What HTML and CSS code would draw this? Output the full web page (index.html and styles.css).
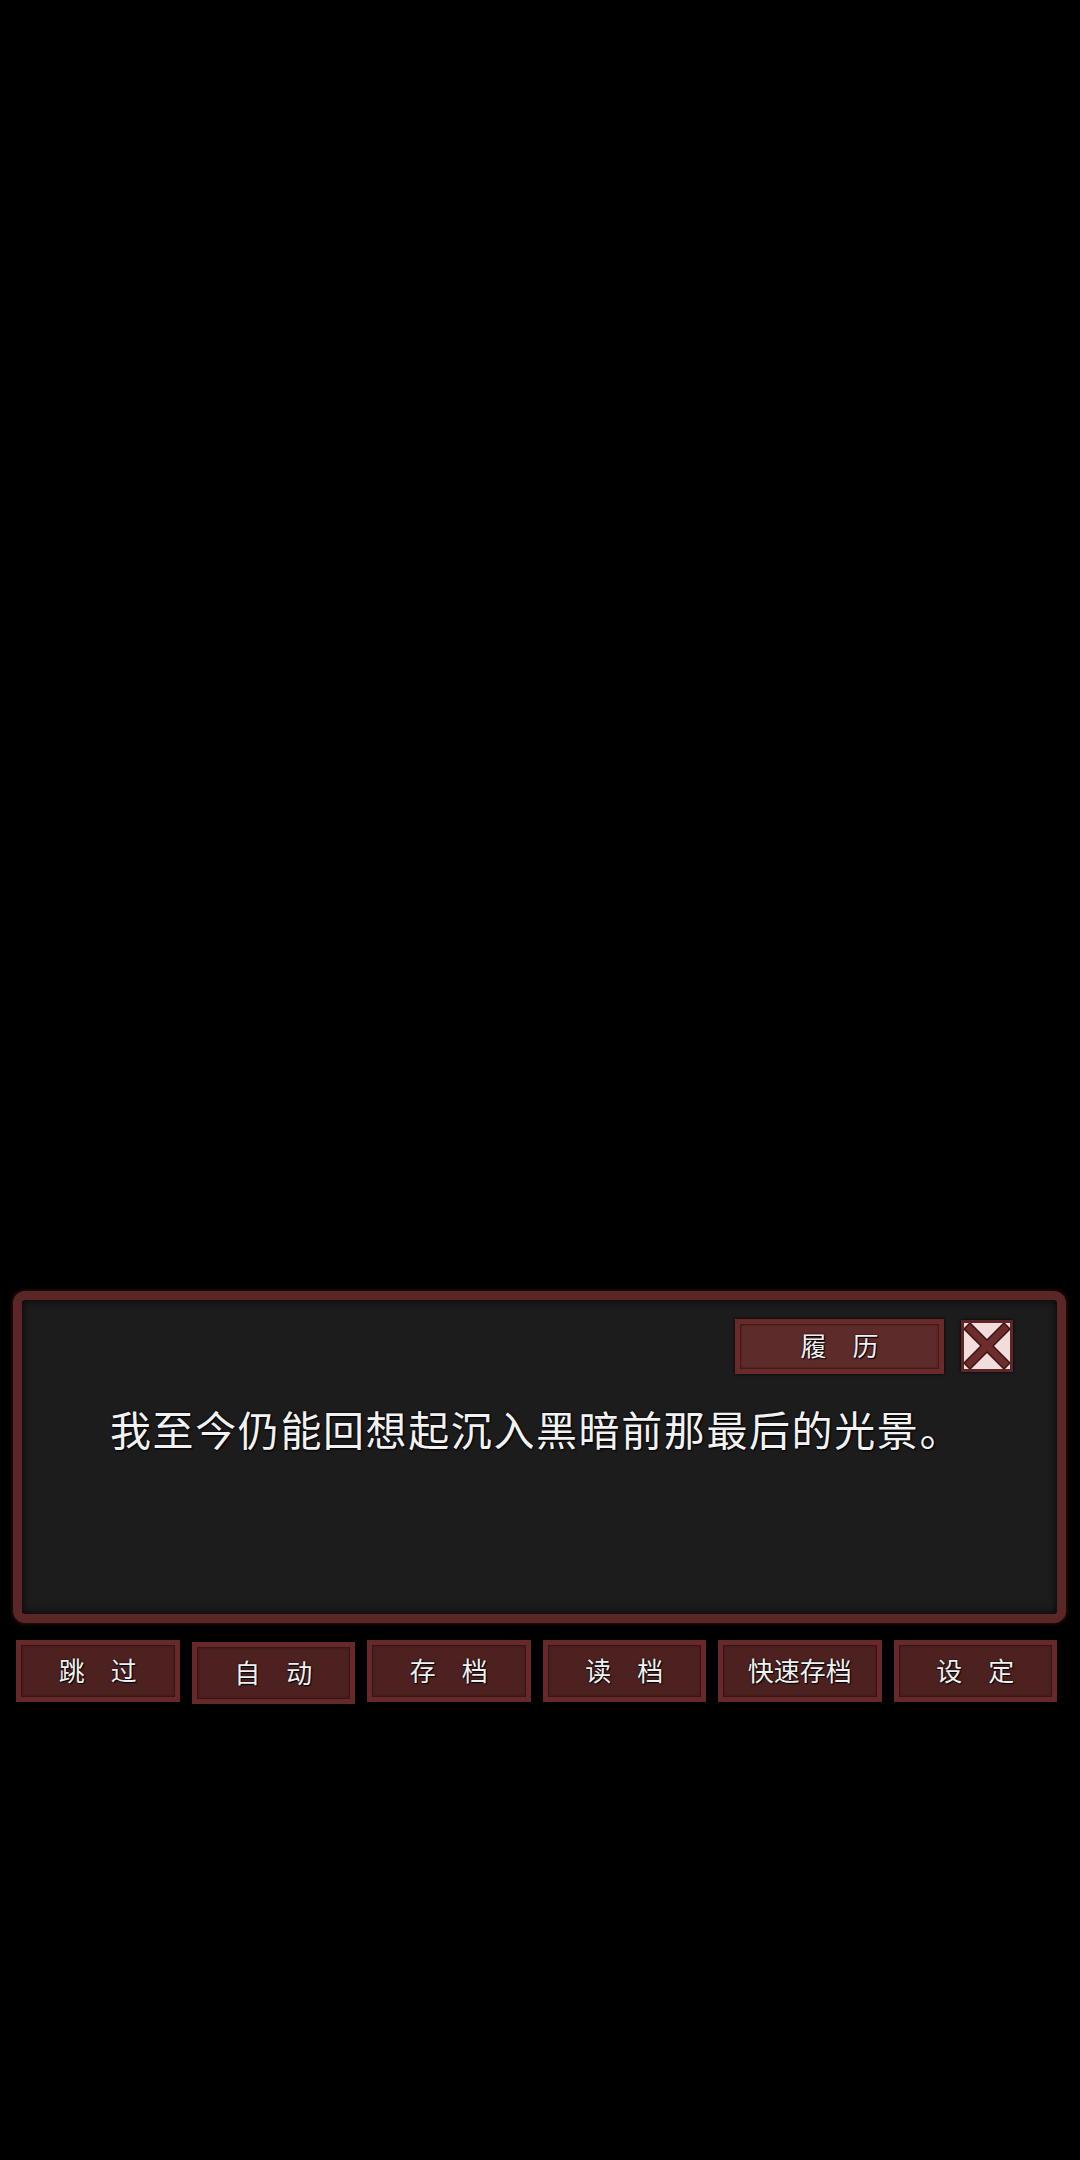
FILE: index.html
```html
<!DOCTYPE html>
<html lang="zh-CN">
<head>
    <meta charset="UTF-8">
    <meta name="viewport" content="width=device-width, initial-scale=1.0">
    <title>文本框</title>
    <link rel="stylesheet" href="styles.css">
</head>
<body>
    <div class="stage">
        <div class="message-box">
            <div class="box-tools">
                <button class="tool-button">履　历</button>
                <button class="close-button" aria-label="关闭">
                    <svg viewBox="0 0 46 46" width="46" height="46">
                        <g stroke-linecap="square">
                            <line x1="6" y1="6" x2="40" y2="40" stroke="#3a1414" stroke-width="10"/>
                            <line x1="40" y1="6" x2="6" y2="40" stroke="#3a1414" stroke-width="10"/>
                            <line x1="6" y1="6" x2="40" y2="40" stroke="#6e2c2c" stroke-width="7"/>
                            <line x1="40" y1="6" x2="6" y2="40" stroke="#6e2c2c" stroke-width="7"/>
                        </g>
                    </svg>
                </button>
            </div>
            <p class="line">我至今仍能回想起沉入黑暗前那最后的光景。</p>
        </div>

        <div class="menu-bar">
            <button class="menu-button">跳　过</button>
            <button class="menu-button pressed">自　动</button>
            <button class="menu-button">存　档</button>
            <button class="menu-button">读　档</button>
            <button class="menu-button">快速存档</button>
            <button class="menu-button">设　定</button>
        </div>
    </div>
</body>
</html>
```

FILE: styles.css
```css
body {
    margin: 0;
    background-color: #000000;
    font-family: "Noto Sans CJK SC", "Noto Sans", sans-serif;
    color: #f2f2f2;
}

.stage {
    width: 1080px;
    height: 2160px;
    padding-top: 1291px;
    box-sizing: border-box;
}

.message-box {
    margin: 0 14px 0 13px;
    height: 332px;
    box-sizing: border-box;
    border: 9px solid #5a2626;
    border-radius: 12px;
    background-color: #1c1c1c;
    box-shadow: 0 0 5px rgba(130, 40, 40, 0.55), inset 0 0 8px rgba(0, 0, 0, 0.85);
    padding: 18px 44px 0 88px;
}

.box-tools {
    display: flex;
    justify-content: flex-end;
    align-items: center;
    gap: 17px;
}

.tool-button {
    width: 209px;
    height: 55px;
    box-sizing: border-box;
    border: 5px solid #6a2a2a;
    background-color: #5e2b2b;
    box-shadow: inset 0 0 2px 1px #3a1616, 0 0 3px #000;
    color: #f0f0f0;
    font-family: inherit;
    font-size: 26px;
    line-height: 1;
    padding: 0 0 4px;
    text-shadow: 0 0 2px #000, 1px 1px 1px #000;
    margin-top: 1px;
}

.close-button {
    width: 52px;
    height: 52px;
    box-sizing: border-box;
    border: 3px solid #5e2626;
    background-color: #f2dcdc;
    box-shadow: 0 0 3px #000;
    padding: 0;
    display: flex;
    align-items: center;
    justify-content: center;
}

.line {
    margin: 30px 0 0;
    font-size: 41px;
    line-height: 48px;
    letter-spacing: 1.6px;
    white-space: nowrap;
    text-shadow: 0 0 2px #000, 1px 1px 2px #000;
}

.menu-bar {
    display: flex;
    gap: 12px;
    margin: 17px 23px 0 16px;
}

.menu-button {
    flex: 1;
    height: 62px;
    box-sizing: border-box;
    border: 5px solid #662828;
    background-color: #4e2121;
    box-shadow: inset 0 0 2px 1px #341212;
    color: #f0f0f0;
    font-family: inherit;
    font-size: 26px;
    line-height: 1;
    padding: 0 0 3px;
    text-shadow: 0 0 2px #000, 1px 1px 1px #000;
}

.menu-button.pressed {
    margin-top: 2px;
}
```
